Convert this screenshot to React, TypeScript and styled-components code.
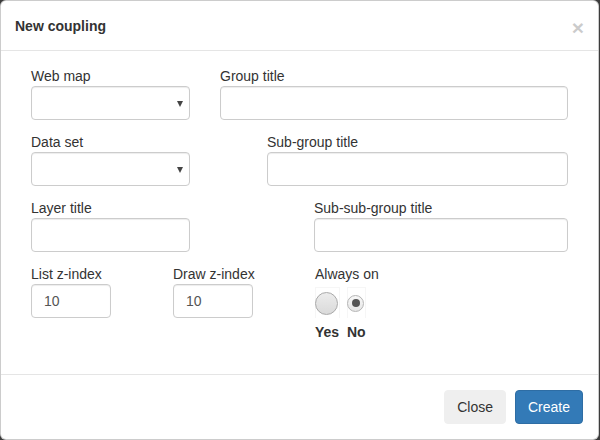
import React from "react";
import styled, { createGlobalStyle } from "styled-components";

const Global = createGlobalStyle`
  html, body { margin: 0; padding: 0; background: #3c3c3c; }
  body { font-family: "Liberation Sans", Arial, sans-serif; font-size: 14px; line-height: 20px; color: #333; }
  * { box-sizing: border-box; }
`;

const Modal = styled.div`
  width: 599px;
  height: 440px;
  background: #fff;
  border: 1px solid rgba(0, 0, 0, 0.2);
  border-radius: 6px;
  display: flex;
  flex-direction: column;
  overflow: hidden;
`;

const Header = styled.div`
  display: flex;
  align-items: center;
  justify-content: space-between;
  padding: 15px 14px 14px 14px;
  border-bottom: 1px solid #e5e5e5;
`;

const Title = styled.h4`
  margin: 0;
  font-size: 14px;
  font-weight: bold;
  line-height: 20px;
  color: #333;
`;

const CloseX = styled.button`
  border: 0;
  background: none;
  padding: 0;
  margin: 0 0 -2px 0;
  font-family: "Liberation Sans", Arial, sans-serif;
  font-size: 21px;
  font-weight: bold;
  line-height: 1;
  color: #000;
  opacity: 0.2;
  cursor: pointer;
`;

const Body = styled.div`
  flex: 1;
  padding: 15px 30px 0 30px;
`;

const Row = styled.div<{ $gap: number }>`
  display: flex;
  gap: ${(p) => p.$gap}px;
  margin-bottom: 12px;
`;

const Field = styled.div<{ $w?: number }>`
  display: flex;
  flex-direction: column;
  ${(p) => (p.$w ? `width: ${p.$w}px; flex: none;` : `flex: 1;`)}
`;

const Label = styled.label`
  display: block;
  height: 20px;
  font-size: 14px;
  line-height: 20px;
  white-space: nowrap;
  color: #333;
`;

const Input = styled.input`
  width: 100%;
  height: 34px;
  padding: 6px 12px;
  font-family: "Liberation Sans", Arial, sans-serif;
  font-size: 14px;
  color: #555;
  background: #fff;
  border: 1px solid #ccc;
  border-radius: 4px;
  box-shadow: inset 0 1px 1px rgba(0, 0, 0, 0.075);
  outline: none;
`;

const SelectBox = styled.div`
  position: relative;
  height: 34px;
  border: 1px solid #ccc;
  border-radius: 4px;
  background: #fff;
  box-shadow: inset 0 1px 1px rgba(0, 0, 0, 0.075);
`;

const Caret = styled.span`
  position: absolute;
  right: 6px;
  top: 14px;
  width: 0;
  height: 0;
  border-left: 3.5px solid transparent;
  border-right: 3.5px solid transparent;
  border-top: 6px solid #444;
`;

const RadioGrid = styled.div`
  display: grid;
  grid-template-columns: 25px 19px;
  column-gap: 7px;
  margin-top: 3px;
`;

const RadioCell = styled.div`
  height: 31px;
  display: flex;
  align-items: center;
  justify-content: flex-start;
  border: 1px solid #f6f6f6;
  border-bottom: 0;
`;

const BigRadio = styled.span`
  display: block;
  width: 23px;
  height: 23px;
  margin-left: -1px;
  border-radius: 50%;
  border: 1px solid #a9a9a9;
  background: linear-gradient(#ececec, #dadada);
`;

const SmallRadio = styled.span`
  display: flex;
  align-items: center;
  justify-content: center;
  width: 17px;
  height: 17px;
  margin-left: -1px;
  border-radius: 50%;
  border: 1px solid #b5b5b5;
  background: linear-gradient(#f8f8f8, #e6e6e6);
  &::after {
    content: "";
    width: 8px;
    height: 8px;
    border-radius: 50%;
    background: #555;
  }
`;

const RadioText = styled.span`
  font-weight: bold;
  font-size: 14px;
  line-height: 20px;
  margin-top: 4px;
  color: #333;
`;

const Footer = styled.div`
  display: flex;
  justify-content: flex-end;
  gap: 9px;
  padding: 15px 15px 15px 15px;
  border-top: 1px solid #e5e5e5;
`;

const Button = styled.button<{ $primary?: boolean }>`
  height: 34px;
  padding: 6px 12px;
  font-family: "Liberation Sans", Arial, sans-serif;
  font-size: 14px;
  line-height: 20px;
  border-radius: 4px;
  border: 1px solid ${(p) => (p.$primary ? "#2e6da4" : "#efefef")};
  background: ${(p) => (p.$primary ? "#337ab7" : "#efefef")};
  color: ${(p) => (p.$primary ? "#fff" : "#333")};
  cursor: pointer;
`;

const Select = () => (
  <SelectBox>
    <Caret />
  </SelectBox>
);

export default function App() {
  return (
    <>
      <Global />
      <Modal>
        <Header>
          <Title>New coupling</Title>
          <CloseX aria-label="Close">×</CloseX>
        </Header>
        <Body>
          <Row $gap={30}>
            <Field $w={159}>
              <Label>Web map</Label>
              <Select />
            </Field>
            <Field>
              <Label>Group title</Label>
              <Input />
            </Field>
          </Row>
          <Row $gap={77}>
            <Field $w={159}>
              <Label>Data set</Label>
              <Select />
            </Field>
            <Field>
              <Label>Sub-group title</Label>
              <Input />
            </Field>
          </Row>
          <Row $gap={124}>
            <Field $w={159}>
              <Label>Layer title</Label>
              <Input />
            </Field>
            <Field>
              <Label>Sub-sub-group title</Label>
              <Input />
            </Field>
          </Row>
          <Row $gap={62}>
            <Field $w={80}>
              <Label>List z-index</Label>
              <Input defaultValue="10" />
            </Field>
            <Field $w={80}>
              <Label>Draw z-index</Label>
              <Input defaultValue="10" />
            </Field>
            <Field>
              <Label>Always on</Label>
              <RadioGrid>
                <RadioCell>
                  <BigRadio />
                </RadioCell>
                <RadioCell>
                  <SmallRadio />
                </RadioCell>
                <RadioText>Yes</RadioText>
                <RadioText>No</RadioText>
              </RadioGrid>
            </Field>
          </Row>
        </Body>
        <Footer>
          <Button>Close</Button>
          <Button $primary>Create</Button>
        </Footer>
      </Modal>
    </>
  );
}
